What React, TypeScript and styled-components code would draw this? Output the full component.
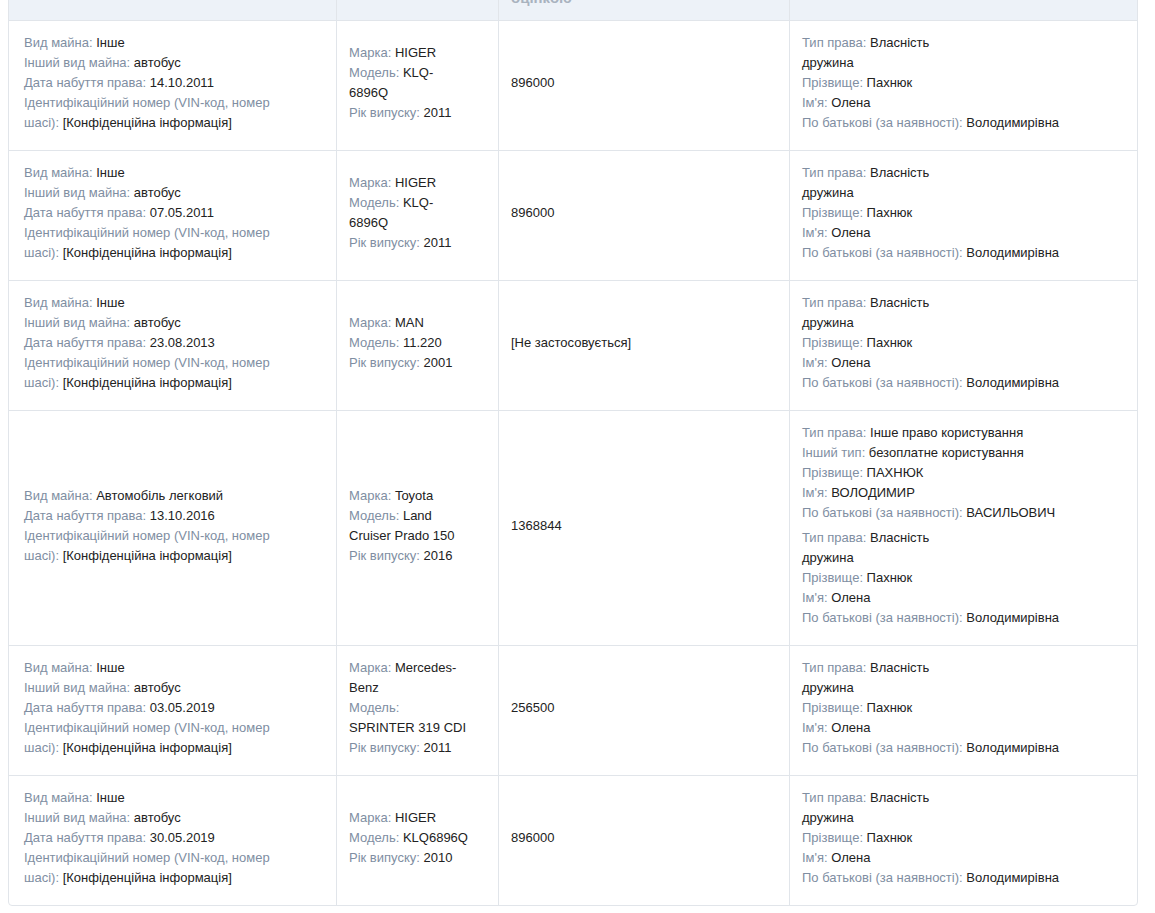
import React from 'react';
import styled, { createGlobalStyle } from 'styled-components';

type Field = { label?: string; value: string };
type Owner = Field[];
type Vehicle = {
    property: Field[];
    car: Field[];
    cost: string;
    owners: Owner[];
};

const spouse: Owner = [
    { label: 'Тип права', value: 'Власність' },
    { value: 'дружина' },
    { label: 'Прізвище', value: 'Пахнюк' },
    { label: "Ім'я", value: 'Олена' },
    { label: 'По батькові (за наявності)', value: 'Володимирівна' },
];

const vin: Field = { label: 'Ідентифікаційний номер (VIN-код, номер шасі)', value: '[Конфіденційна інформація]' };

const bus = (date: string): Field[] => [
    { label: 'Вид майна', value: 'Інше' },
    { label: 'Інший вид майна', value: 'автобус' },
    { label: 'Дата набуття права', value: date },
    vin,
];

const car = (brand: string, model: string, year: string): Field[] => [
    { label: 'Марка', value: brand },
    { label: 'Модель', value: model },
    { label: 'Рік випуску', value: year },
];

const vehicles: Vehicle[] = [
    { property: bus('14.10.2011'), car: car('HIGER', 'KLQ-6896Q', '2011'), cost: '896000', owners: [spouse] },
    { property: bus('07.05.2011'), car: car('HIGER', 'KLQ-6896Q', '2011'), cost: '896000', owners: [spouse] },
    { property: bus('23.08.2013'), car: car('MAN', '11.220', '2001'), cost: '[Не застосовується]', owners: [spouse] },
    {
        property: [
            { label: 'Вид майна', value: 'Автомобіль легковий' },
            { label: 'Дата набуття права', value: '13.10.2016' },
            vin,
        ],
        car: car('Toyota', 'Land Cruiser Prado 150', '2016'),
        cost: '1368844',
        owners: [
            [
                { label: 'Тип права', value: 'Інше право користування' },
                { label: 'Інший тип', value: 'безоплатне користування' },
                { label: 'Прізвище', value: 'ПАХНЮК' },
                { label: "Ім'я", value: 'ВОЛОДИМИР' },
                { label: 'По батькові (за наявності)', value: 'ВАСИЛЬОВИЧ' },
            ],
            spouse,
        ],
    },
    {
        property: bus('03.05.2019'),
        car: car('Mercedes-Benz', 'SPRINTER\u00a0319\u00a0CDI', '2011'),
        cost: '256500',
        owners: [spouse],
    },
    { property: bus('30.05.2019'), car: car('HIGER', 'KLQ6896Q', '2010'), cost: '896000', owners: [spouse] },
];

const Fields: React.FC<{ items: Field[] }> = ({ items }) => (
    <Group>
        {items.map((f, i) => (
            <Line key={i}>
                {f.label && <Label>{f.label}: </Label>}
                {f.value}
            </Line>
        ))}
    </Group>
);

const App: React.FC = () => {
    return (
        <>
            <GlobalStyle />
            <TableCard>
                <HeadCell $first>Вид майна</HeadCell>
                <HeadCell>Марка / модель</HeadCell>
                <HeadCell>
                    <div>Вартість на дату набуття</div>
                    <div>або за останньою грошовою</div>
                    <div>оцінкою</div>
                </HeadCell>
                <HeadCell $last>Права на об'єкт</HeadCell>
                {vehicles.map((v, i) => {
                    const lastRow = i === vehicles.length - 1;
                    return (
                        <React.Fragment key={i}>
                            <Cell $first $lastRow={lastRow}>
                                <Fields items={v.property} />
                            </Cell>
                            <Cell $lastRow={lastRow}>
                                <Fields items={v.car} />
                            </Cell>
                            <Cell $lastRow={lastRow}>
                                <Group>
                                    <Line>{v.cost}</Line>
                                </Group>
                            </Cell>
                            <Cell $last $lastRow={lastRow}>
                                {v.owners.map((o, j) => (
                                    <Fields key={j} items={o} />
                                ))}
                            </Cell>
                        </React.Fragment>
                    );
                })}
            </TableCard>
        </>
    );
};
export default App;

const GlobalStyle = createGlobalStyle`
html {
    background: #fff;
    overflow: hidden;
}
body {
    margin: 0 8px;
    font-family: "Liberation Sans", Arial, sans-serif;
    font-size: 13px;
    color: #222;
}
`;

const TableCard = styled.div`
    width: 1130px;
    box-sizing: border-box;
    margin-top: -65px;
    border: 1px solid #e1e5ea;
    border-radius: 4px;
    overflow: hidden;
    display: grid;
    grid-template-columns: 328px 162px 291px 1fr;
`;

const HeadCell = styled.div<{ $first?: boolean; $last?: boolean }>`
    box-sizing: border-box;
    height: 85px;
    background: #edf2f8;
    border-bottom: 1px solid #e1e5ea;
    border-right: ${(p) => (p.$last ? 'none' : '1px solid #e1e5ea')};
    padding: 12px 12px 12px ${(p) => (p.$first ? '15px' : '12px')};
    font-size: 15px;
    font-weight: bold;
    line-height: 20px;
    color: #a9b3bf;
    display: flex;
    flex-direction: column;
    justify-content: center;
`;

const Cell = styled.div<{ $first?: boolean; $last?: boolean; $lastRow?: boolean }>`
    box-sizing: border-box;
    border-bottom: ${(p) => (p.$lastRow ? 'none' : '1px solid #e1e5ea')};
    border-right: ${(p) => (p.$last ? 'none' : '1px solid #e1e5ea')};
    padding: 12px ${(p) => (p.$first ? '32px' : '29px')} 12px ${(p) => (p.$first ? '15px' : '12px')};
    display: flex;
    flex-direction: column;
    justify-content: center;
`;

const Group = styled.div`
    margin-bottom: 5px;
`;

const Line = styled.div`
    line-height: 20px;
    color: #222;
`;

const Label = styled.span`
    color: #808ea2;
`;
